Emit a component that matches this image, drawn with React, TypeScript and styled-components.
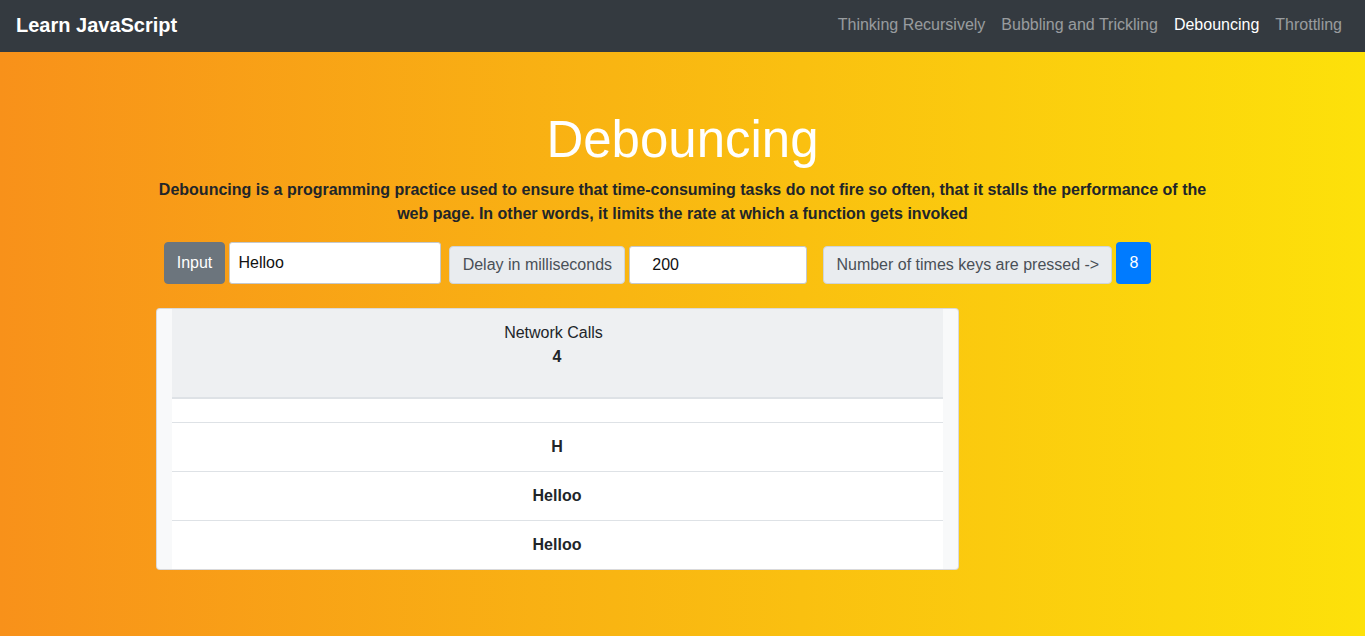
import React from "react";
import styled, { createGlobalStyle } from "styled-components";

const Global = createGlobalStyle`
  html, body { margin: 0; padding: 0; }
  body {
    font-family: "Liberation Sans", Arial, sans-serif;
    font-size: 16px;
    line-height: 1.5;
    color: #212529;
    background: linear-gradient(to right, #f8911a 0%, #f9b512 45%, #fde10a 100%);
    min-height: 636px;
  }
  * { box-sizing: border-box; }
`;

const Page = styled.div`
  min-height: 636px;
  background: linear-gradient(to right, #f8911a 0%, #f9b512 45%, #fde10a 100%);
`;

const NavBar = styled.nav`
  height: 52px;
  background: #343a40;
  display: flex;
  align-items: center;
  justify-content: space-between;
  padding: 0 15px 2px 16px;
`;

const Brand = styled.a`
  color: #fff;
  font-size: 20px;
  font-weight: 700;
  line-height: 30px;
  text-decoration: none;
`;

const NavLinks = styled.div`
  display: flex;
`;

const NavLink = styled.a<{ $active?: boolean }>`
  color: ${(p) => (p.$active ? "#fff" : "rgba(255,255,255,0.5)")};
  font-size: 16px;
  padding: 0 8px;
  line-height: 24px;
  text-decoration: none;
`;

const Main = styled.main`
  width: 1054px;
  margin: 0 auto;
  padding-top: 57px;
`;

const Title = styled.h1`
  margin: 0 0 8px;
  text-align: center;
  color: #fff;
  font-size: 51px;
  font-weight: 400;
  line-height: 1.2;
`;

const Lead = styled.p`
  margin: 0 0 16px;
  text-align: center;
  font-weight: 700;
  font-size: 16px;
  line-height: 24px;
  color: #212529;
`;

const Controls = styled.div`
  display: flex;
  align-items: flex-end;
  padding-left: 8px;
`;

const Group = styled.div<{ $gap?: number }>`
  display: flex;
  align-items: flex-end;
  gap: 4px;
  margin-right: ${(p) => p.$gap ?? 0}px;
`;

const Addon = styled.span<{ $dark?: boolean; $tall?: boolean }>`
  display: flex;
  align-items: center;
  height: ${(p) => (p.$tall ? 42 : 38)}px;
  padding: 0 12.2px;
  border-radius: 4px;
  border: 1px solid ${(p) => (p.$dark ? "#6c757d" : "#ced4da")};
  background: ${(p) => (p.$dark ? "#6c757d" : "#e9ecef")};
  color: ${(p) => (p.$dark ? "#fff" : "#495057")};
  font-size: 16px;
  white-space: nowrap;
`;

const Field = styled.input<{ $w: number; $tall?: boolean; $pl?: number }>`
  width: ${(p) => p.$w}px;
  height: ${(p) => (p.$tall ? 42 : 38)}px;
  padding: 0 8px 0 ${(p) => p.$pl ?? 8}px;
  border: 1px solid #c4c8cc;
  border-radius: 3px;
  background: #fff;
  color: #111;
  font-family: "Liberation Sans", Arial, sans-serif;
  font-size: 16px;
  outline: none;
`;

const Count = styled.span`
  display: flex;
  align-items: center;
  justify-content: center;
  width: 35px;
  height: 42px;
  border-radius: 4px;
  background: #007bff;
  color: #fff;
  font-size: 16px;
`;

const Card = styled.div`
  width: 803px;
  margin-top: 24px;
  border: 1px solid rgba(0, 0, 0, 0.125);
  border-radius: 4px;
  background: #f8f9fa;
  padding: 0 15px;
  overflow: hidden;
`;

const Table = styled.table`
  width: 100%;
  border-collapse: collapse;
  background: #fff;
`;

const HeadCell = styled.th`
  background: #eef0f2;
  font-weight: 400;
  color: #212529;
  text-align: center;
  padding: 12px;
  border-bottom: 2px solid #dee2e6;
  line-height: 24px;
`;

const HeadLabel = styled.div`
  margin-right: 7px;
`;

const HeadCount = styled.div`
  font-weight: 700;
  margin-bottom: 16px;
`;

const Cell = styled.td<{ $first?: boolean }>`
  text-align: center;
  font-weight: 700;
  line-height: 24px;
  height: ${(p) => (p.$first ? 24 : 48)}px;
  padding: ${(p) => (p.$first ? "0" : "12px")};
  border-top: ${(p) => (p.$first ? "none" : "1px solid #dee2e6")};
  color: #212529;
`;

const rows = ["", "H", "Helloo", "Helloo"];

export default function App() {
  return (
    <Page>
      <Global />
      <NavBar>
        <Brand href="#">Learn JavaScript</Brand>
        <NavLinks>
          <NavLink href="#">Thinking Recursively</NavLink>
          <NavLink href="#">Bubbling and Trickling</NavLink>
          <NavLink href="#" $active>
            Debouncing
          </NavLink>
          <NavLink href="#">Throttling</NavLink>
        </NavLinks>
      </NavBar>
      <Main>
        <Title>Debouncing</Title>
        <Lead>
          Debouncing is a programming practice used to ensure that time-consuming tasks do not fire so
          often, that it stalls the performance of the web page. In other words, it limits the rate at
          which a function gets invoked
        </Lead>
        <Controls>
          <Group $gap={8}>
            <Addon $dark $tall>
              Input
            </Addon>
            <Field $w={212} $tall defaultValue="Helloo" />
          </Group>
          <Group $gap={16}>
            <Addon>Delay in milliseconds</Addon>
            <Field $w={178} $pl={22} defaultValue="200" />
          </Group>
          <Group>
            <Addon>Number of times keys are pressed -&gt;</Addon>
            <Count>8</Count>
          </Group>
        </Controls>
        <Card>
          <Table>
            <thead>
              <tr>
                <HeadCell>
                  <HeadLabel>Network Calls</HeadLabel>
                  <HeadCount>4</HeadCount>
                </HeadCell>
              </tr>
            </thead>
            <tbody>
              {rows.map((r, i) => (
                <tr key={i}>
                  <Cell $first={i === 0}>{r}</Cell>
                </tr>
              ))}
            </tbody>
          </Table>
        </Card>
      </Main>
    </Page>
  );
}
